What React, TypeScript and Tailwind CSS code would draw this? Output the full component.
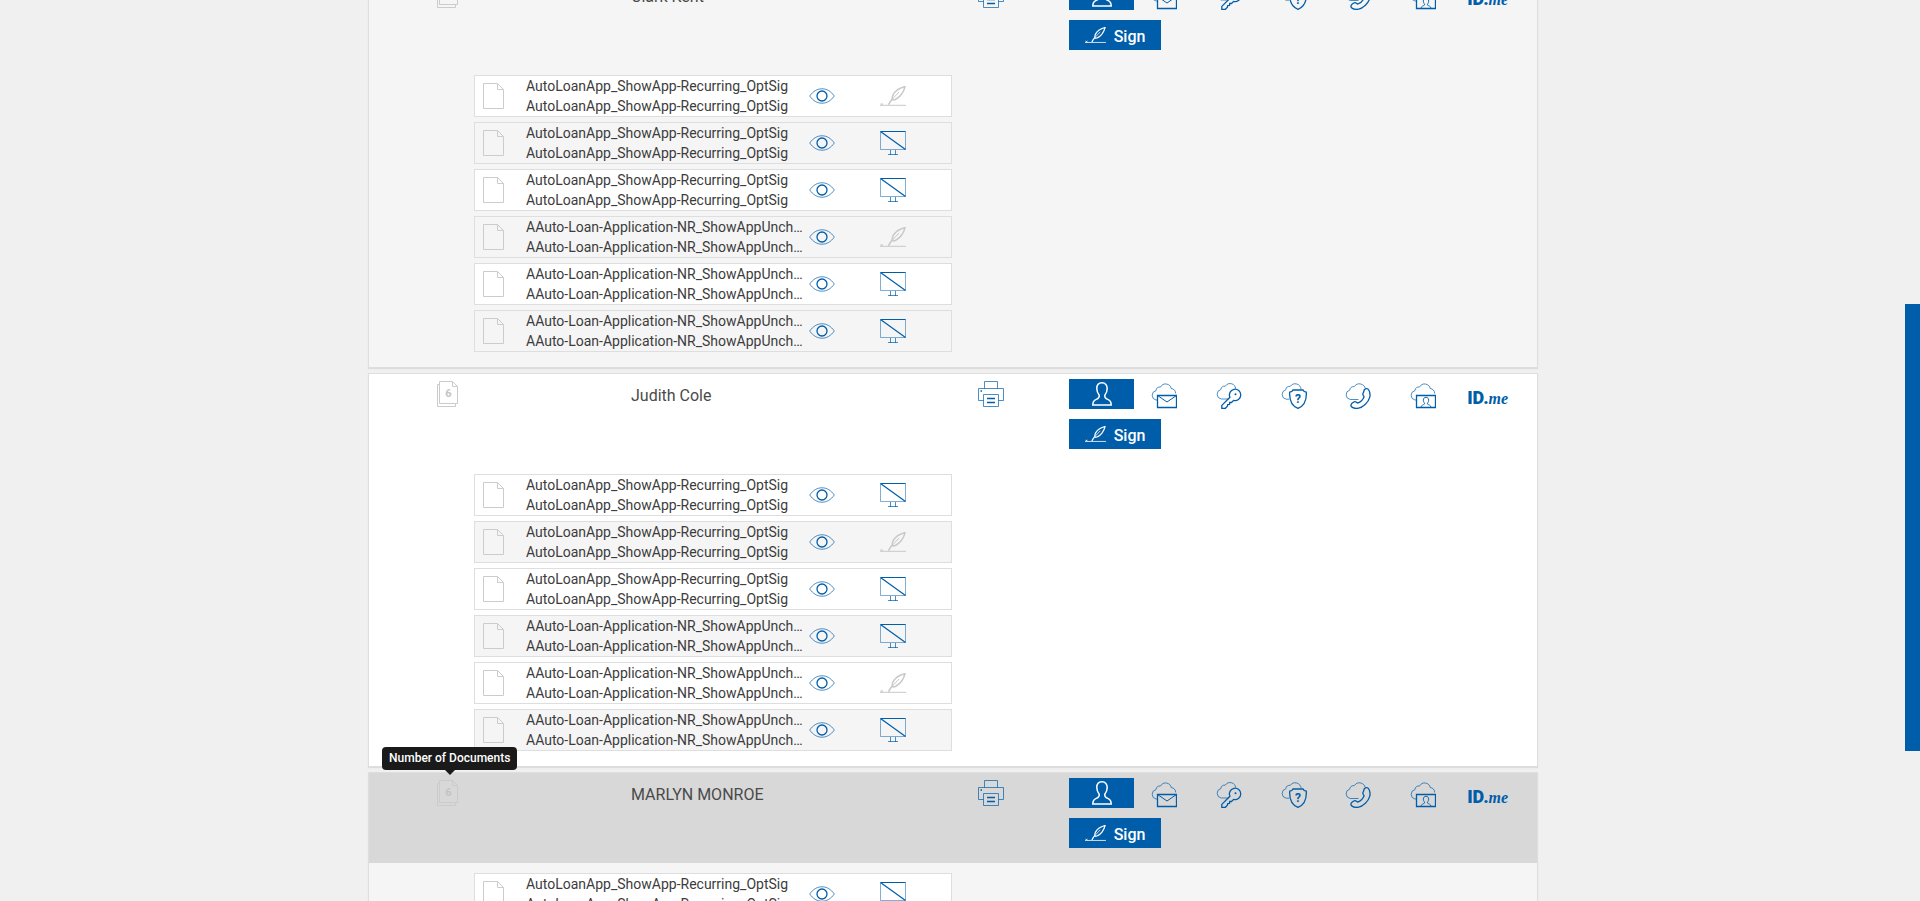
type DocKind = "sign" | "view";

interface Signer {
  name: string;
  shade: string;
  headShade: string;
  tooltip?: boolean;
  docs: DocKind[];
}

const signers: Signer[] = [
  { name: "Clark Kent", shade: "bg-[#f5f5f5]", headShade: "", docs: ["sign", "view", "view", "sign", "view", "view"] },
  { name: "Judith Cole", shade: "bg-white", headShade: "", docs: ["view", "sign", "view", "view", "sign", "view"] },
  { name: "MARLYN MONROE", shade: "bg-[#f5f5f5]", headShade: "bg-[#d8d8d8]", tooltip: true, docs: ["view", "sign", "view", "view", "sign", "view"] },
];

function DocsIcon() {
  return (
    <svg width="21" height="26" viewBox="0 0 21 26" fill="none" stroke="#cbcbcb" strokeWidth="1">
      <path d="M2.500 3.500H.5v22h18v-3" />
      <path d="M2.500.5h13l5 5v17h-18z" />
      <path d="M15.500 .5v5h5" />
      <text x="11.500" y="16" textAnchor="middle" className="fill-[#c4c4c4] stroke-none text-[11px] font-bold">6</text>
    </svg>
  );
}

function FileIcon() {
  return (
    <svg width="21" height="26" viewBox="0 0 21 26" fill="none" stroke="#cccccc">
      <path d="M.5.5h14l6 6v19H.5z" />
      <path d="M14.500 .5v6h6" />
    </svg>
  );
}

function EyeIcon() {
  return (
    <svg width="26" height="16" viewBox="0 0 26 16" fill="none" stroke="#005da9">
      <path d="M.7 8C4 3.300 8.200 .8 13 .8S22 3.300 25.300 8C22 12.700 17.800 15.200 13 15.200S4 12.700 .7 8z" strokeWidth=".7" />
      <circle cx="13" cy="8" r="5" strokeWidth="1.300" />
    </svg>
  );
}

function MonitorIcon() {
  return (
    <svg width="26" height="25" viewBox="0 0 26 25" fill="none" stroke="#005da9">
      <path d="M.5.5h25v18H.5z" strokeWidth=".5" />
      <path d="M.5.5h25M.5.5l25 18" strokeWidth="1.200" />
      <path d="M10.500 19v5M15.500 19v5M8 23.500h10" strokeWidth=".7" />
    </svg>
  );
}

function QuillIcon({ className }: { className: string }) {
  return (
    <svg className={className} viewBox="0 0 26 20" fill="none" stroke="currentColor">
      <path d="M0 19.300h26" />
      <path d="M.5 17.500l2.500 1.500M3 17.500L.5 19" strokeWidth=".8" />
      <path d="M8.500 18.800C9.500 16.500 11 14.500 12.200 13c-.3-3 2-6.500 5-9C20 2.200 23 1.200 25 .6c-.5 2.400-1.700 5.400-3.700 7.900-2.400 3-5.300 5.400-8.800 5.600" strokeWidth="1.500" />
      <path d="M12 13.500l7-7.500" />
    </svg>
  );
}

function PrinterIcon() {
  return (
    <svg width="26" height="26" viewBox="0 0 26 26" fill="none" stroke="#005da9" strokeWidth=".7">
      <path d="M6.500 7.500v-7h13v7" />
      <path d="M5.500 19.500h-5v-12h25v12h-5" />
      <path d="M5.500 13.500h15v12h-15z" />
      <path d="M9 17.500h8M9 21.500h8" strokeWidth="1.300" />
      <path d="M2.500 10h1.500" strokeWidth="1.500" />
    </svg>
  );
}

function PersonIcon() {
  return (
    <svg width="20" height="24" viewBox="0 0 20 24" fill="none" stroke="#fff" strokeWidth="1.500">
      <path d="M10 .8c-3.400 0-5.200 2.300-5.200 5.800 0 3 1 5 2.400 6.600.4 2.300-.6 3.300-2.900 4.200C1.800 18.400.8 19.600.8 22.900h18.400c0-3.300-1-4.500-3.500-5.500-2.300-.9-3.300-1.900-2.900-4.200 1.400-1.600 2.400-3.600 2.400-6.600C15.200 3.100 13.400.8 10 .8z" />
    </svg>
  );
}

const cloud = "M6 17H5A4.800 4.800 0 0 1 5 7.600C5.200 5 7 3.600 9.400 4.100 10.800 1.700 13 .6 15.300 1c3 .4 4.600 2.400 4.900 4.500 2.600.3 4.500 2.200 4.500 5";

function MailIcon() {
  return (
    <svg width="26" height="26" viewBox="0 0 26 26" fill="none" stroke="#005da9">
      <path d={cloud} strokeWidth=".7" />
      <path d="M6.500 12.500h19v12h-19z" strokeWidth="1.300" />
      <path d="M6.500 12.500l9.500 6.500 9.500-6.500" />
    </svg>
  );
}

function KeyIcon() {
  return (
    <svg width="26" height="26" viewBox="0 0 26 26" fill="none" stroke="#005da9">
      <path d="M12.500 16H5.200A4.800 4.800 0 0 1 4.800 6.600C5 4 7 2.800 9.200 3.200 10.800.8 13.400.1 15.800.8c2.400.7 3.600 2.600 3.900 4.800" strokeWidth=".7" />
      <path d="M13.900 14.300a5.700 5.700 0 1 1 3.700 3.100l-2.100 2.100-1.800-.1-.2 2-1.800.1-.3 1.700-2 2.100H5.800v-2.900z" strokeWidth="1.300" />
      <circle cx="19.500" cy="11.300" r="1" fill="#005da9" stroke="none" />
    </svg>
  );
}

function ShieldIcon() {
  return (
    <svg width="26" height="26" viewBox="0 0 26 26" fill="none" stroke="#005da9">
      <path d="M8 16.200H5.200A4.800 4.800 0 0 1 4.800 6.800C5 4.200 7 3 9.200 3.400 10.800 1 13.400.3 15.800 1c2.800.8 4 3 4.300 5.200" strokeWidth=".7" />
      <path d="M12 7c-.5 1.300-1.700 2-3.300 2.100-.4 7.200 1.300 13.500 8.300 16.200 7-2.700 8.700-9 8.300-16.200C23.700 9 22.500 8.300 22 7z" strokeWidth="1.300" />
      <text x="17" y="19.500" textAnchor="middle" className="fill-[#005da9] stroke-none text-[12px] font-bold">?</text>
    </svg>
  );
}

function PhoneIcon() {
  return (
    <svg width="26" height="26" viewBox="0 0 26 26" fill="none" stroke="#005da9">
      <path d="M13.500 16.500H5.200A4.800 4.800 0 0 1 4.800 7.100C5 4.500 7 3.300 9.200 3.700 10.800 1.200 13.400.3 15.800 1c2.600.7 4 2.400 4.400 4.400" strokeWidth=".7" />
      <path d="M19.300 6.700c1.600-1.500 3.400-1.500 4.500.3 2.700 4.700.8 10.300-3.400 14.200-4 3.700-9 5.200-13 3.200-1.900-1-1.900-3-.4-4.200l1.400-1c1-.7 2.100-.7 3 0l1.200.9c2.800-.8 5.400-3.400 6.500-6.300l-.8-1.300c-.6-1-.5-2.200.2-3.100z" strokeWidth="1.300" />
    </svg>
  );
}

function WebcamIcon() {
  return (
    <svg width="26" height="26" viewBox="0 0 26 26" fill="none" stroke="#005da9">
      <path d={cloud} strokeWidth=".7" />
      <path d="M6.500 12.500h19v12h-19z" strokeWidth="1.300" />
      <path d="M11 24.500c0-2.500 2.500-2.500 3.600-3.500.3-.8-1.300-2-1.300-3.900 0-1.700 1-2.800 2.700-2.800s2.700 1.100 2.700 2.800c0 1.900-1.600 3.100-1.300 3.900 1.100 1 3.600 1 3.600 3.500" strokeWidth=".9" />
    </svg>
  );
}

function IdMe() {
  return (
    <span className="flex items-baseline pt-1 text-[#005da9]">
      <span className="text-lg leading-5 font-black">ID.</span>
      <span className="font-['Liberation_Serif',serif] text-base leading-5 font-bold italic">me</span>
    </span>
  );
}

const methods = [
  { label: "Email", icon: <MailIcon /> },
  { label: "Access code", icon: <KeyIcon /> },
  { label: "Security question", icon: <ShieldIcon /> },
  { label: "Phone", icon: <PhoneIcon /> },
  { label: "Webcam", icon: <WebcamIcon /> },
  { label: "ID.me", icon: <IdMe /> },
];

function DocumentRow({ title, kind, odd }: { title: string; kind: DocKind; odd: boolean }) {
  return (
    <li className={`flex h-[42px] items-center border border-[#dedede] pl-2 ${odd ? "bg-[#f5f5f5]" : "bg-white"}`}>
      <FileIcon />
      <div className="ml-[22px] w-[283px] shrink-0 text-sm leading-5 text-[#3c3c3c]">
        <p className="truncate">{title}</p>
        <p className="truncate">{title}</p>
      </div>
      <button type="button" aria-label="View document" className="shrink-0">
        <EyeIcon />
      </button>
      <span className="ml-[45px] shrink-0">
        {kind === "view" ? <MonitorIcon /> : <QuillIcon className="h-5 w-[26px] text-[#c8c8c8]" />}
      </span>
    </li>
  );
}

function SignerCard({ signer }: { signer: Signer }) {
  return (
    <section className={`border border-[#dedede] pb-[15px] shadow-[0_1px_1px_rgba(0,0,0,0.08)] ${signer.shade}`}>
      <header className={`flex h-[90px] items-start pt-[5px] pl-[68px] ${signer.headShade}`}>
        <div className="relative mt-[2px] w-[194px] shrink-0">
          <DocsIcon />
          {signer.tooltip && (
            <div role="tooltip" className="absolute bottom-[36px] -left-[55px] rounded bg-[#1a1a1a] px-[7px] py-1 text-xs leading-[15px] font-medium whitespace-nowrap text-white">
              Number of Documents
              <span className="absolute top-full left-1/2 -ml-[5px] border-x-[5px] border-t-[5px] border-x-transparent border-t-[#1a1a1a]" />
            </div>
          )}
        </div>
        <h2 className="mt-[5px] w-[347px] shrink-0 text-base leading-6 text-[#4a4a4a]">{signer.name}</h2>
        <button type="button" aria-label="Print" className="mt-[2px] shrink-0">
          <PrinterIcon />
        </button>
        <div className="ml-[65px]">
          <div className="flex h-[30px]">
            <button type="button" aria-label="In person" className="flex w-[65px] items-center justify-center bg-[#005da9]">
              <PersonIcon />
            </button>
            <div className="-ml-0.5 grid w-[388px] grid-cols-6">
              {methods.map((m) => (
                <button key={m.label} type="button" aria-label={m.label} className="flex items-center justify-center pt-1">
                  {m.icon}
                </button>
              ))}
            </div>
          </div>
          <button type="button" className="mt-[10px] flex h-[30px] w-[92px] items-center justify-center gap-2 bg-[#005da9] text-base font-medium text-white">
            <QuillIcon className="h-4 w-[21px]" />
            <span className="pt-1">Sign</span>
          </button>
        </div>
      </header>
      <ul className="mt-[10px] ml-[105px] flex w-[478px] flex-col gap-[5px]">
        {signer.docs.map((kind, i) => (
          <DocumentRow
            key={i}
            kind={kind}
            odd={i % 2 === 1}
            title={i < 3 ? "AutoLoanApp_ShowApp-Recurring_OptSig" : "AAuto-Loan-Application-NR_ShowAppUnchecked_OptSig"}
          />
        ))}
      </ul>
    </section>
  );
}

export default function App() {
  return (
    <div className="flex h-screen overflow-hidden bg-[#f0f0f0] font-[Roboto,sans-serif]">
      <main className="flex-1 pl-px">
        <div className="mx-auto -mt-[26px] flex max-w-[1170px] flex-col gap-[5px]">
          {signers.map((s) => (
            <SignerCard key={s.name} signer={s} />
          ))}
        </div>
      </main>
      <div className="w-[15px] pt-[304px]">
        <div className="h-[447px] bg-[#005da9]" />
      </div>
    </div>
  );
}
